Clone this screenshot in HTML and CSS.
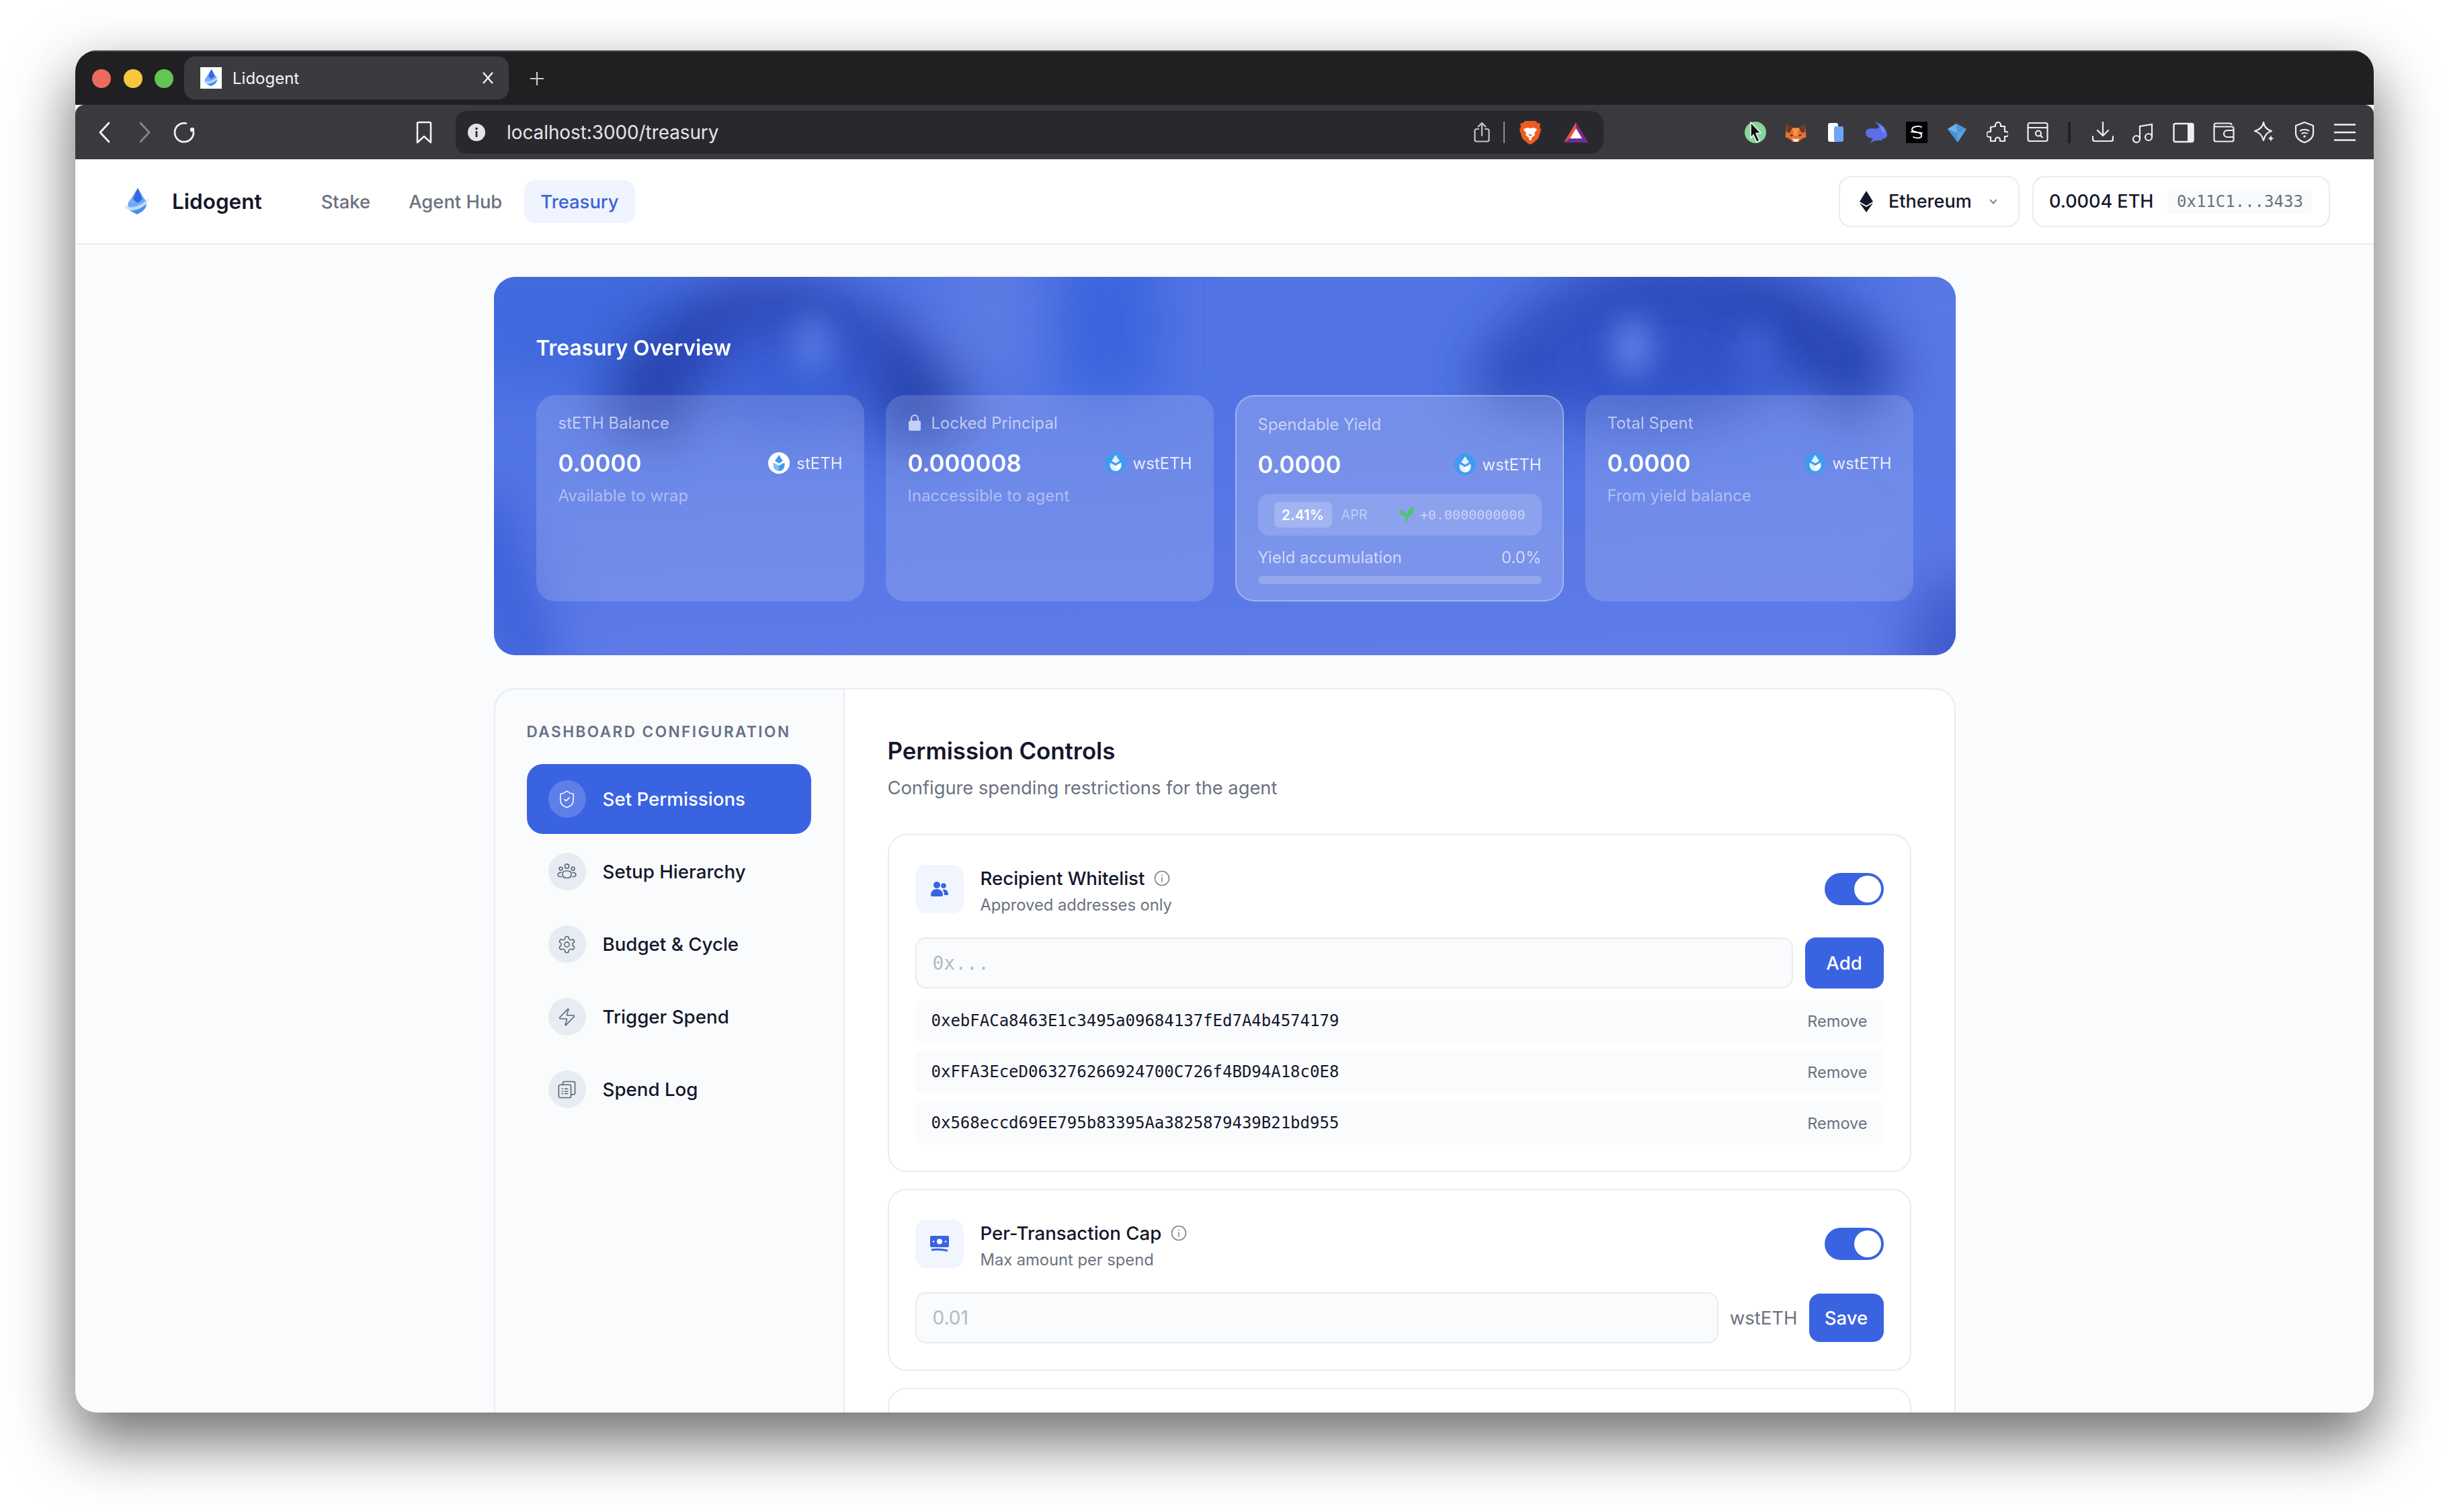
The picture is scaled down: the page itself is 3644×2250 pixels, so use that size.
FILE: index.html
```html
<!DOCTYPE html>
<html lang="en">
<head>
<meta charset="utf-8">
<title>Lidogent</title>
<link rel="stylesheet" href="styles.css">
</head>
<body>
<svg class="defs" width="0" height="0" aria-hidden="true">
  <defs>
    <linearGradient id="drop" x1="0" y1="0" x2="0.3" y2="1"><stop offset="0" stop-color="#3868e4"/><stop offset="0.5" stop-color="#7db2f4"/><stop offset="1" stop-color="#3f8cf0"/></linearGradient>
    <symbol id="logo" viewBox="0 0 40 40">
      <path d="M21 0 L31 16 C37 23 33 31 27 35 L20 39 L12 35 C5 31 4 23 10 17 Z" fill="url(#drop)"/>
      <path d="M21 0 L28 16 L21 22 L14 17 Z" fill="#3565e0"/>
      <path d="M1 25 C7 30 25 26 38 15 C37 25 17 38 4 31 C2 30 1 27 1 25 Z" fill="#d6e6fc" opacity=".85"/>
      <path d="M7 24 C14 27 26 22 34 17 C28 25 16 30 7 28 Z" fill="#78aef3"/>
    </symbol>
    <symbol id="wst" viewBox="0 0 32 32">
      <circle cx="16" cy="16" r="16" fill="#3f9bf1"/>
      <path d="M16 4 L22 13 L16 16.500 L10 13 Z" fill="#dff0ff"/>
      <path d="M8 15.500 L16 20 L16 28 C10 28 6 22 8 15.500 Z" fill="#dff0ff"/>
      <path d="M24 15.500 L16 20 L16 28 C22 28 26 22 24 15.500 Z" fill="#ffffff"/>
    </symbol>
    <symbol id="st" viewBox="0 0 32 32">
      <circle cx="16" cy="16" r="16" fill="#ffffff"/>
      <path d="M16 4 L22 13 L16 16.500 L10 13 Z" fill="#3f9bf1"/>
      <path d="M8 15.500 L16 20 L16 28 C10 28 6 22 8 15.500 Z" fill="#7fbdf5"/>
      <path d="M24 15.500 L16 20 L16 28 C22 28 26 22 24 15.500 Z" fill="#3f9bf1"/>
    </symbol>
    <symbol id="info" viewBox="0 0 24 24">
      <circle cx="12" cy="12" r="10.500" fill="none" stroke="#7b8290" stroke-width="1.600"/>
      <path d="M12 11v6" stroke="#7b8290" stroke-width="1.600" stroke-linecap="round"/>
      <circle cx="12" cy="7.600" r="1" fill="#7b8290"/>
    </symbol>
  </defs>
</svg>

<div class="window">
  <div class="tabstrip">
    <div class="lights"><span class="light red"></span><span class="light yellow"></span><span class="light green"></span></div>
    <div class="tab">
      <span class="favicon"><svg width="26" height="28"><use href="#logo"/></svg></span>
      <span class="tab-title">Lidogent</span>
      <svg class="tab-close" width="18" height="20" viewBox="0 0 18 20"><path d="M2 2l14 16M16 2L2 18" stroke="#f2f2f3" stroke-width="2.400"/></svg>
    </div>
    <svg class="tab-new" width="24" height="24" viewBox="0 0 24 24"><path d="M12 2v20M2 12h20" stroke="#c9c9cc" stroke-width="2.200"/></svg>
  </div>

  <div class="toolbar">
    <svg class="tb-back" width="18" height="32" viewBox="0 0 18 32"><path d="M16 2L3 16l13 14" fill="none" stroke="#f2f2f3" stroke-width="2.800" stroke-linecap="round" stroke-linejoin="round"/></svg>
    <svg class="tb-fwd" width="18" height="32" viewBox="0 0 18 32"><path d="M2 2l13 14L2 30" fill="none" stroke="#85858a" stroke-width="2.800" stroke-linecap="round" stroke-linejoin="round"/></svg>
    <svg class="tb-reload" width="34" height="34" viewBox="0 0 34 34"><path d="M20 3.500A14 14 0 1 0 31 17" fill="none" stroke="#f2f2f3" stroke-width="2.800" stroke-linecap="round"/><circle cx="29" cy="13" r="3.200" fill="#f2f2f3"/></svg>
    <svg class="tb-mark" width="26" height="34" viewBox="0 0 26 34"><path d="M3 4a2 2 0 0 1 2-2h16a2 2 0 0 1 2 2v28l-10-9L3 32z" fill="none" stroke="#f2f2f3" stroke-width="2.600" stroke-linejoin="round"/></svg>
    <div class="urlbar">
      <svg class="url-info" width="26" height="26" viewBox="0 0 26 26"><circle cx="13" cy="13" r="13" fill="#e4e4e8"/><rect x="11.600" y="11" width="2.800" height="9" fill="#2a2a2e"/><circle cx="13" cy="7.400" r="1.800" fill="#2a2a2e"/></svg>
      <span class="url-text">localhost:3000/treasury</span>
      <div class="url-actions">
        <svg width="24" height="32" viewBox="0 0 24 32"><path d="M7 11H4a2.500 2.500 0 0 0-2.500 2.500V27A2.500 2.500 0 0 0 4 29.500h16a2.500 2.500 0 0 0 2.500-2.500V13.500A2.500 2.500 0 0 0 20 11h-3M12 21V2M6.500 7.500L12 2l5.500 5.500" fill="none" stroke="#c6c6ca" stroke-width="2.200" stroke-linecap="round" stroke-linejoin="round"/></svg>
        <span class="url-sep"></span>
        <svg class="ic-brave" width="32" height="36" viewBox="0 0 32 36"><path d="M8 1h16l3 3 4 1-1 5 2 4-4 13-8 7-4 2-4-2-8-7L0 14l2-4-1-5 4-1z" fill="#ee5b22"/><path d="M8 12l5-1 3 1 3-1 5 1 2 2-4 5 1 3-5 4v3l-2 1-2-1v-3l-5-4 1-3-4-5z" fill="#fff"/><path d="M13 21h6l-3 3z" fill="#ee5b22"/></svg>
        <svg class="ic-bat" width="36" height="32" viewBox="0 0 36 32"><path d="M18 1L36 31H0z" fill="#7b2c8c"/><path d="M18 1L0 31l9-6L18 9z" fill="#ee5238"/><path d="M0 31h36l-9-6H9z" fill="#6b2f96"/><path d="M18 10l9 15H9z" fill="#fff"/></svg>
      </div>
    </div>
    <div class="exts">
      <svg class="ext" viewBox="0 0 32 32"><circle cx="16" cy="16" r="16" fill="#86d69b"/><path d="M9 1l15 16-7 .5 5 11-4 2-5-11-4 5z" fill="#0d0d0d" stroke="#fff" stroke-width="1.400"/></svg>
      <svg class="ext" viewBox="0 0 32 32"><path d="M1 15L3 3l7 6h12l7-6 2 12 .5 8-7 3-4 4h-9l-4-4-7-3z" fill="#e8702f"/><path d="M3 2l8 8-4 7-5-2zM29 2l-8 8 4 7 5-2z" fill="#6d3b23"/><path d="M11 10h10l-3 11h-4z" fill="#f4914c"/><path d="M11 25l5 1 5-1-2 5h-6z" fill="#f6e8dd"/><path d="M7 19l5 1-2 2zM25 19l-5 1 2 2z" fill="#2a211d"/></svg>
      <svg class="ext" viewBox="0 0 32 32"><rect x="4" y="2" width="15" height="28" rx="3" fill="#ffffff"/><rect x="13" y="7" width="14" height="23" rx="3" fill="#6ea4f3"/></svg>
      <svg class="ext" viewBox="0 0 33 32"><path d="M14 0C21 1 33 9 33 20C33 24 29 26 24 26L26 28L14 29L7 32L11 25C5 25 0 22 0 17C0 12 4 10 8 10C12 10 16 11 20 9C21 6 18 3 14 0Z" fill="#5e6ee8"/><path d="M22 5C26 8 29 13 29 19C26 15 24 10 22 5Z" fill="#8a9cf2"/></svg>
      <svg class="ext" viewBox="0 0 32 32"><rect width="32" height="32" fill="#000"/><path d="M23 8c-4-2-13-1-14 3-1 3 5 4 8 5 4 1 7 3 6 6-1 3-8 3-12 1M8 15l16 2" fill="none" stroke="#fff" stroke-width="1.800" stroke-linecap="round"/></svg>
      <svg class="ext" viewBox="0 0 32 32"><path d="M2 11L15 3l15 8-13 20z" fill="#5aa3e0"/><path d="M2 11l13-8 1 14z" fill="#6cb2ea"/><path d="M30 11L15 3l1 14z" fill="#4d94d4"/><path d="M2 11l14 6 1 14z" fill="#4a90d0"/></svg>
      <svg class="ext" viewBox="0 0 32 32"><path d="M13 5a4 4 0 0 1 8 0v2h6v8h2.500a3.500 3.500 0 0 1 0 7H27v7h-7v-2a3.500 3.500 0 0 0-7 0v2H6v-6H4a4 4 0 0 1 0-8h2V8l7-1z" fill="none" stroke="#efeff1" stroke-width="2.200" stroke-linejoin="round"/></svg>
      <svg class="ext" viewBox="0 0 32 32"><rect x="1.500" y="2" width="29" height="27" rx="2.500" fill="none" stroke="#efeff1" stroke-width="2.200"/><path d="M1.500 9h29" stroke="#efeff1" stroke-width="2.200"/><circle cx="17" cy="17.500" r="4" fill="none" stroke="#efeff1" stroke-width="2.200"/><path d="M20 20.500l3.500 3.500" stroke="#efeff1" stroke-width="2.200"/></svg>
      <span class="ext-sep"></span>
      <svg class="ext" viewBox="0 0 32 32"><path d="M16 1v20M8 13l8 8 8-8M1 22v4a3 3 0 0 0 3 3h24a3 3 0 0 0 3-3v-4" fill="none" stroke="#efeff1" stroke-width="2.200" stroke-linecap="round" stroke-linejoin="round"/></svg>
      <svg class="ext" viewBox="0 0 32 32"><path d="M11 25V7l18-3v19" fill="none" stroke="#efeff1" stroke-width="2.200"/><circle cx="6" cy="26" r="5" fill="none" stroke="#efeff1" stroke-width="2.200"/><circle cx="24" cy="23" r="5" fill="none" stroke="#efeff1" stroke-width="2.200"/></svg>
      <svg class="ext" viewBox="0 0 32 32"><rect x="1.500" y="3" width="29" height="27" rx="2.500" fill="none" stroke="#efeff1" stroke-width="2.400"/><path d="M22 3h6a2.500 2.500 0 0 1 2.500 2.500v22A2.500 2.500 0 0 1 28 30h-6z" fill="#efeff1"/></svg>
      <svg class="ext" viewBox="0 0 32 32"><path d="M1.500 7v20a2.500 2.500 0 0 0 2.500 2.500h24a2.500 2.500 0 0 0 2.500-2.500V10A2.500 2.500 0 0 0 28 7.500H4a2.500 2.500 0 0 1 0-5h21a2.500 2.500 0 0 1 2.500 2.500" fill="none" stroke="#efeff1" stroke-width="2.200"/><path d="M30 13H21a4 4 0 0 0 0 10h9" fill="none" stroke="#efeff1" stroke-width="2.200"/></svg>
      <svg class="ext" viewBox="0 0 32 32"><path d="M15 1c1 7 5 11 12 13-7 2-10 6-12 14-2-8-6-12-13-14C9 12 14 8 15 1z" fill="none" stroke="#efeff1" stroke-width="2.200" stroke-linejoin="round"/><path d="M26 20c.5 3 2 4.500 5 5-3 .5-4.500 2-5 5-.5-3-2-4.500-5-5 3-.5 4.500-2 5-5z" fill="#efeff1"/></svg>
      <svg class="ext" viewBox="0 0 32 32"><path d="M16 1l13 5v11c0 7-6 12-13 14C9 29 3 24 3 17V6z" fill="none" stroke="#efeff1" stroke-width="2.200" stroke-linejoin="round"/><path d="M9 14c4-3 10-3 14 0M11.500 18c3-2 6-2 9 0" fill="none" stroke="#efeff1" stroke-width="2"/><circle cx="16" cy="22" r="1.800" fill="#efeff1"/></svg>
      <svg class="ext" viewBox="0 0 32 32"><path d="M0 4.500h32M0 16h32M0 27.500h32" stroke="#efeff1" stroke-width="2.400"/></svg>
    </div>
  </div>

  <header class="navbar">
    <svg class="brand-logo" width="40" height="40"><use href="#logo"/></svg>
    <span class="brand-name">Lidogent</span>
    <nav class="nav">
      <a class="nav-link">Stake</a>
      <a class="nav-link">Agent Hub</a>
      <a class="nav-link is-active">Treasury</a>
    </nav>
    <div class="nav-right">
      <div class="chain-btn">
        <svg width="20" height="32" viewBox="0 0 20 32"><path d="M10 0L20 16 10 22 0 16z" fill="#14172b"/><path d="M0 18l10 6 10-6-10 14z" fill="#14172b"/></svg>
        <span>Ethereum</span>
        <svg class="chev" width="12" height="8" viewBox="0 0 12 8"><path d="M1 1l5 5.500L11 1" fill="none" stroke="#5f6675" stroke-width="1.600"/></svg>
      </div>
      <div class="wallet-btn">
        <span>0.0004 ETH</span>
        <span class="addr">0x11C1...3433</span>
      </div>
    </div>
  </header>

  <main class="page">
    <section class="hero">
      <svg class="hero-bg" viewBox="0 0 2175 563" preserveAspectRatio="none" aria-hidden="true">
        <defs>
          <filter id="b40" x="-30%" y="-30%" width="160%" height="160%"><feGaussianBlur stdDeviation="40"/></filter>
          <filter id="b15" x="-60%" y="-60%" width="220%" height="220%"><feGaussianBlur stdDeviation="20"/></filter>
        </defs>
        <g filter="url(#b40)">
          <rect x="-60" y="-40" width="340" height="200" fill="#4169de"/>
          <rect x="840" y="-40" width="150" height="220" fill="#3a63dd"/>
          <rect x="680" y="-40" width="120" height="200" fill="#5c7be4"/>
          <path d="M210 230C270 20 500 0 670 230" fill="none" stroke="#2643ae" stroke-width="130"/>
          <ellipse cx="440" cy="150" rx="130" ry="80" fill="#3a5fd6"/>
          <path d="M-30 330L60 610" stroke="#3a5fd8" stroke-width="90"/>
          <path d="M1510 190C1580 0 1900 -30 2060 180" fill="none" stroke="#2545b0" stroke-width="125"/>
          <ellipse cx="1720" cy="130" rx="200" ry="95" fill="#3053c8"/>
          <rect x="2110" y="-40" width="100" height="300" fill="#5a79e3"/>
          <ellipse cx="2190" cy="560" rx="90" ry="120" fill="#3f5ccc"/>
        </g>
        <g filter="url(#b15)">
          <ellipse cx="474" cy="100" rx="30" ry="42" fill="#5a7de6" opacity=".8"/>
          <ellipse cx="1694" cy="104" rx="30" ry="44" fill="#6285e8" opacity=".85"/>
          <ellipse cx="1880" cy="112" rx="30" ry="46" fill="#4566da" opacity=".7"/>
        </g>
      </svg>
      <h1 class="hero-title">Treasury Overview</h1>
      <div class="stats">
        <article class="stat">
          <div class="stat-label">stETH Balance</div>
          <div class="stat-row">
            <span class="stat-value">0.0000</span>
            <span class="token"><svg width="32" height="32"><use href="#st"/></svg>stETH</span>
          </div>
          <div class="stat-sub">Available to wrap</div>
        </article>
        <article class="stat">
          <div class="stat-label"><svg class="lock" width="18" height="26" viewBox="0 0 18 26"><path d="M4 11V7a5 5 0 0 1 10 0v4" fill="none" stroke="#c4cff5" stroke-width="2"/><rect y="10" width="18" height="15" rx="2.500" fill="#c4cff5"/></svg>Locked Principal</div>
          <div class="stat-row">
            <span class="stat-value">0.000008</span>
            <span class="token"><svg width="32" height="32"><use href="#wst"/></svg>wstETH</span>
          </div>
          <div class="stat-sub">Inaccessible to agent</div>
        </article>
        <article class="stat stat-hl">
          <div class="stat-label">Spendable Yield</div>
          <div class="stat-row">
            <span class="stat-value">0.0000</span>
            <span class="token"><svg width="32" height="32"><use href="#wst"/></svg>wstETH</span>
          </div>
          <div class="apr-box">
            <span class="apr-pill">2.41%</span>
            <span class="apr-label">APR</span>
            <svg class="leaf" width="24" height="26" viewBox="0 0 24 26"><path d="M11 25c-1-3-1-6 0-9C6 16 1 12 1 6c5 0 9 3 11 8 0-6 4-11 11-13 1 7-2 13-9 15-1 3-1 6-1 9z" fill="#4fc46f"/></svg>
            <span class="apr-num">+0.0000000000</span>
          </div>
          <div class="yield-row"><span>Yield accumulation</span><span>0.0%</span></div>
          <div class="progress"></div>
        </article>
        <article class="stat">
          <div class="stat-label">Total Spent</div>
          <div class="stat-row">
            <span class="stat-value">0.0000</span>
            <span class="token"><svg width="32" height="32"><use href="#wst"/></svg>wstETH</span>
          </div>
          <div class="stat-sub">From yield balance</div>
        </article>
      </div>
    </section>

    <section class="config">
      <aside class="side">
        <div class="side-head">DASHBOARD CONFIGURATION</div>
        <ul class="side-list">
          <li class="side-item is-active">
            <span class="side-ic"><svg viewBox="0 0 24 24"><path d="M20 13c0 5-3.500 7.500-7.660 8.950a1 1 0 0 1-.67-.01C7.500 20.500 4 18 4 13V6a1 1 0 0 1 1-1c2 0 4.500-1.200 6.240-2.720a1.170 1.170 0 0 1 1.520 0C14.510 3.810 17 5 19 5a1 1 0 0 1 1 1z"/><path d="M9 12l2 2 4-4"/></svg></span>
            Set Permissions
          </li>
          <li class="side-item">
            <span class="side-ic"><svg viewBox="0 0 24 24"><circle cx="12" cy="5" r="2.600"/><circle cx="4.500" cy="8" r="2"/><circle cx="19.500" cy="8" r="2"/><path d="M6.500 15c0-3 2.500-4.500 5.500-4.500s5.500 1.500 5.500 4.500-2.500 4.500-5.500 4.500-5.500-1.500-5.500-4.500z"/><path d="M5 12.500C2.500 12.800 1 14.200 1 15.500s1.500 2.500 4 2.500M19 12.500c2.500.3 4 1.700 4 3s-1.500 2.500-4 2.500"/></svg></span>
            Setup Hierarchy
          </li>
          <li class="side-item">
            <span class="side-ic"><svg viewBox="0 0 24 24"><path d="M12.220 2h-.440a2 2 0 0 0-2 2v.180a2 2 0 0 1-1 1.730l-.430.250a2 2 0 0 1-2 0l-.150-.080a2 2 0 0 0-2.730.730l-.220.380a2 2 0 0 0 .730 2.730l.150.100a2 2 0 0 1 1 1.720v.510a2 2 0 0 1-1 1.740l-.150.090a2 2 0 0 0-.730 2.730l.220.380a2 2 0 0 0 2.730.730l.150-.080a2 2 0 0 1 2 0l.430.250a2 2 0 0 1 1 1.730V20a2 2 0 0 0 2 2h.440a2 2 0 0 0 2-2v-.180a2 2 0 0 1 1-1.730l.430-.250a2 2 0 0 1 2 0l.150.080a2 2 0 0 0 2.730-.730l.220-.390a2 2 0 0 0-.730-2.730l-.150-.080a2 2 0 0 1-1-1.740v-.500a2 2 0 0 1 1-1.740l.150-.090a2 2 0 0 0 .730-2.730l-.220-.380a2 2 0 0 0-2.730-.730l-.150.080a2 2 0 0 1-2 0l-.430-.250a2 2 0 0 1-1-1.730V4a2 2 0 0 0-2-2z"/><circle cx="12" cy="12" r="3"/></svg></span>
            Budget &amp; Cycle
          </li>
          <li class="side-item">
            <span class="side-ic"><svg viewBox="0 0 24 24"><path d="M4 14a1 1 0 0 1-.780-1.630l9.900-10.200a.500.500 0 0 1 .860.460l-1.920 6.020A1 1 0 0 0 13 10h7a1 1 0 0 1 .780 1.630l-9.900 10.200a.500.500 0 0 1-.860-.460l1.920-6.020A1 1 0 0 0 11 14z"/></svg></span>
            Trigger Spend
          </li>
          <li class="side-item">
            <span class="side-ic"><svg viewBox="0 0 24 24"><rect x="2" y="6" width="15" height="16" rx="2"/><path d="M7 6V4a2 2 0 0 1 2-2h11a2 2 0 0 1 2 2v12a2 2 0 0 1-2 2h-3M6 11h1M9.500 11H13M6 14h1M9.500 14H13M6 17h1M9.500 17H13"/></svg></span>
            Spend Log
          </li>
        </ul>
      </aside>
      <div class="content">
        <h2 class="content-title">Permission Controls</h2>
        <p class="content-sub">Configure spending restrictions for the agent</p>

        <div class="perm">
          <div class="perm-head">
            <span class="perm-ic"><svg width="28" height="28" viewBox="0 0 28 28"><circle cx="10" cy="8" r="5" fill="#3a63e2"/><circle cx="20" cy="9" r="3.800" fill="#3a63e2"/><path d="M1 23c0-6 4-9 9-9s9 3 9 9c0 1-1 2-2 2H3c-1 0-2-1-2-2z" fill="#3a63e2"/><path d="M20 14.500c4 0 7 2.500 7 7 0 1-.8 1.500-1.500 1.500H21c0-3-.8-6-2.500-8z" fill="#3a63e2"/></svg></span>
            <div class="perm-text">
              <div class="perm-title">Recipient Whitelist <svg class="info" width="24" height="24"><use href="#info"/></svg></div>
              <div class="perm-sub">Approved addresses only</div>
            </div>
            <span class="toggle"><span class="knob"></span></span>
          </div>
          <div class="field-row">
            <input class="field field-mono" placeholder="0x..." readonly>
            <button class="btn btn-add">Add</button>
          </div>
          <ul class="addr-list">
            <li class="addr-row"><span class="addr-text">0xebFACa8463E1c3495a09684137fEd7A4b4574179</span><span class="remove">Remove</span></li>
            <li class="addr-row"><span class="addr-text">0xFFA3EceD063276266924700C726f4BD94A18c0E8</span><span class="remove">Remove</span></li>
            <li class="addr-row"><span class="addr-text">0x568eccd69EE795b83395Aa3825879439B21bd955</span><span class="remove">Remove</span></li>
          </ul>
        </div>

        <div class="perm">
          <div class="perm-head">
            <span class="perm-ic"><svg width="30" height="28" viewBox="0 0 30 28"><rect x="1" y="2" width="28" height="17" rx="2" fill="#3a63e2"/><circle cx="15" cy="10.500" r="4" fill="#fff"/><circle cx="6" cy="10.500" r="1.300" fill="#fff"/><circle cx="24" cy="10.500" r="1.300" fill="#fff"/><path d="M3 23c6-1 14-1 24 1" fill="none" stroke="#3a63e2" stroke-width="3"/></svg></span>
            <div class="perm-text">
              <div class="perm-title">Per-Transaction Cap <svg class="info" width="24" height="24"><use href="#info"/></svg></div>
              <div class="perm-sub">Max amount per spend</div>
            </div>
            <span class="toggle"><span class="knob"></span></span>
          </div>
          <div class="field-row">
            <input class="field field-sans" placeholder="0.01" readonly>
            <span class="unit">wstETH</span>
            <button class="btn btn-save">Save</button>
          </div>
        </div>

        <div class="perm perm-next"></div>
      </div>
    </section>
  </main>
</div>
</body>
</html>
```

FILE: styles.css
```css
* { box-sizing: border-box; }
html, body { margin: 0; padding: 0; }
body {
  width: 3644px;
  height: 2250px;
  padding: 75px 112px 0;
  background: #fff;
  overflow: hidden;
  font-family: Inter, "Noto Sans", sans-serif;
  color: #14172b;
}
ul { list-style: none; margin: 0; padding: 0; }
h1, h2, p { margin: 0; }
.defs { position: absolute; }

.window {
  width: 3420px;
  height: 2027px;
  border-radius: 32px;
  overflow: hidden;
  background: #f9fbfd;
  display: flex;
  flex-direction: column;
  box-shadow: 0 40px 90px 4px rgba(0, 0, 0, .56);
}

/* tab strip */
.tabstrip {
  height: 81px;
  flex: none;
  background: #202023;
  display: flex;
  align-items: flex-start;
  box-shadow: inset 0 2px 0 #4a4a4e;
}
.lights { display: flex; gap: 18.500px; margin: 28px 0 0 25px; }
.light { width: 28px; height: 28px; border-radius: 50%; }
.red { background: #ee6a5f; }
.yellow { background: #f5c63e; }
.green { background: #62c554; }
.tab {
  width: 483px;
  height: 64px;
  margin: 9px 0 0 16px;
  padding: 0 22px 0 24px;
  background: #3b3b3f;
  border-radius: 16px;
  display: flex;
  align-items: center;
  color: #f4f4f5;
  font-size: 24px;
}
.favicon { width: 32px; height: 32px; background: #fff; display: flex; align-items: center; justify-content: center; flex: none; }
.tab-title { margin-left: 16px; flex: 1; }
.tab-new { margin: 30px 0 0 30px; }

/* toolbar */
.toolbar {
  height: 81px;
  flex: none;
  background: #3a3a3e;
  border-radius: 14px 14px 0 0;
  display: flex;
  align-items: center;
}
.tb-back { margin-left: 34px; }
.tb-fwd { margin-left: 43px; }
.tb-reload { margin-left: 32px; }
.tb-mark { margin-left: 327px; }
.urlbar {
  width: 1708px;
  height: 64px;
  margin-left: 34px;
  padding: 0 23px 0 18px;
  background: #29292d;
  border-radius: 16px 20px 20px 16px;
  display: flex;
  align-items: center;
  color: #e6e6e8;
  font-size: 27.800px;
}
.url-text { margin-left: 32px; flex: 1; }
.url-actions { display: flex; align-items: center; }
.url-sep { width: 2px; height: 32px; background: #8d8d92; margin: 0 22px 0 20px; }
.ic-bat { margin-left: 34px; }
.exts { display: flex; align-items: center; gap: 28px; margin-left: 210px; }
.ext { width: 32px; height: 32px; flex: none; }
.ext-sep { width: 4px; height: 32px; background: #202023; margin: 0 4px 0 1px; }

/* navbar */
.navbar {
  height: 127px;
  flex: none;
  background: #fff;
  border-bottom: 2px solid #e8ebef;
  display: flex;
  align-items: center;
  padding: 0 65px 0 72px;
}
.brand-logo { flex: none; }
.brand-name { margin-left: 32px; font-size: 31.500px; font-weight: 600; }
.nav { display: flex; gap: 9px; margin-left: 64px; }
.nav-link {
  height: 64px;
  padding: 0 24px;
  border-radius: 16px;
  display: flex;
  align-items: center;
  font-size: 27.400px;
  font-weight: 500;
  color: #6b7280;
}
.nav-link.is-active { background: #eff4fe; color: #3b63d9; }
.nav-right { margin-left: auto; display: flex; gap: 19px; }
.chain-btn, .wallet-btn {
  height: 76px;
  border: 2px solid #e8ebef;
  border-radius: 18px;
  background: #fff;
  display: flex;
  align-items: center;
  font-size: 27px;
  font-weight: 500;
}
.chain-btn { width: 269px; padding-left: 29px; }
.chain-btn span { margin-left: 23px; }
.chev { margin-left: 26px; }
.wallet-btn { width: 443px; padding: 0 25px 0 23px; justify-content: space-between; }
.addr {
  height: 38px;
  width: 215px;
  padding-left: 14px;
  display: flex;
  align-items: center;
  background: #f8fafc;
  border-radius: 8px;
  font-family: "DejaVu Sans Mono", monospace;
  font-size: 24px;
  font-weight: 400;
  color: #6b7280;
}

/* page */
.page { flex: 1; min-height: 0; padding-top: 48px; overflow: hidden; }
.hero {
  position: relative;
  width: 2175px;
  height: 563px;
  margin: 0 auto 49px;
  padding: 84px 63px 0;
  border-radius: 32px;
  overflow: hidden;
  background: linear-gradient(178deg, #5274e4 0%, #5274e4 40%, #607ce8 100%);
}
.hero-bg { position: absolute; inset: 0; width: 100%; height: 100%; }
.hero-title { position: relative; font-size: 31.700px; line-height: 44px; font-weight: 600; color: #fff; margin-bottom: 48px; }
.stats { position: relative; display: grid; grid-template-columns: repeat(4, 1fr); gap: 32px; }
.stat {
  height: 307px;
  padding: 27px 32px 0 33px;
  border-radius: 28px;
  background: rgba(255, 255, 255, .15);
  color: #fff;
}
.stat-hl { background: rgba(255, 255, 255, .2); border: 2px solid rgba(255, 255, 255, .3); padding: 27px 31px 0 32px; }
.stat-label { display: flex; align-items: center; height: 28px; font-size: 24px; color: rgba(255, 255, 255, .6); }
.lock { margin-right: 16px; margin-left: 1px; }
.stat-row { display: flex; align-items: center; justify-content: space-between; height: 48px; margin-top: 22px; }
.stat-value { font-size: 34.800px; font-weight: 600; }
.token { display: flex; align-items: center; gap: 10px; font-size: 24px; color: rgba(255, 255, 255, .85); }
.stat-sub { margin-top: 10px; line-height: 30px; font-size: 24px; color: rgba(255, 255, 255, .45); }
.apr-box {
  height: 62px;
  margin-top: 20px;
  padding: 0 24px;
  border-radius: 16px;
  background: rgba(255, 255, 255, .15);
  display: flex;
  align-items: center;
}
.apr-pill {
  width: 86px;
  height: 38px;
  border-radius: 8px;
  background: rgba(255, 255, 255, .2);
  display: flex;
  align-items: center;
  justify-content: center;
  font-size: 21px;
  font-weight: 600;
}
.apr-label { margin-left: 14px; font-size: 20px; color: rgba(255, 255, 255, .45); }
.leaf { margin-left: 46px; flex: none; }
.apr-num { margin-left: 8px; font-family: "DejaVu Sans Mono", monospace; font-size: 20px; color: rgba(255, 255, 255, .55); }
.yield-row {
  display: flex;
  justify-content: space-between;
  margin-top: 18px;
  line-height: 30px;
  font-size: 24px;
  color: rgba(255, 255, 255, .65);
}
.progress { height: 12px; margin-top: 12px; border-radius: 6px; background: rgba(255, 255, 255, .2); }

/* config */
.config {
  width: 2175px;
  margin: 0 auto;
  height: 1200px;
  border: 2px solid #e8ebef;
  border-radius: 32px;
  background: #fff;
  overflow: hidden;
  display: grid;
  grid-template-columns: 520px 1fr;
}
.side { background: #f9fbfd; border-right: 2px solid #e8ebef; padding: 49px 48px 0 47px; }
.side-head { line-height: 28px; font-size: 22.500px; font-weight: 600; letter-spacing: 2.500px; color: #667085; margin-bottom: 34px; white-space: nowrap; }
.side-list { display: flex; flex-direction: column; gap: 4px; }
.side-item {
  height: 104px;
  padding-left: 32px;
  border-radius: 24px;
  display: flex;
  align-items: center;
  gap: 25px;
  font-size: 27.700px;
  font-weight: 500;
}
.side-item.is-active { background: #3a63e2; color: #fff; }
.side-ic {
  width: 56px;
  height: 56px;
  border-radius: 50%;
  background: #e7ebf2;
  display: flex;
  align-items: center;
  justify-content: center;
  flex: none;
}
.side-ic svg { width: 29px; height: 29px; fill: none; stroke: #5b6475; stroke-width: 1.300; stroke-linecap: round; stroke-linejoin: round; }
.is-active .side-ic { background: rgba(255, 255, 255, .18); }
.is-active .side-ic svg { stroke: #fff; }

.content { padding: 67px 64px 0; background: #fff; }
.content-title { font-size: 34.800px; line-height: 48px; font-weight: 600; }
.content-sub { margin-top: 14px; font-size: 27.300px; line-height: 36px; color: #6b7280; }
.perm {
  margin-top: 25px;
  padding: 44px 39px 39px;
  border: 2px solid #e8ebef;
  border-radius: 28px;
  background: #fff;
}
.content-sub + .perm { margin-top: 50px; }
.perm-next { height: 200px; }
.perm-head { display: flex; align-items: center; height: 72px; }
.perm-ic {
  width: 72px;
  height: 72px;
  border-radius: 16px;
  background: #f1f6fe;
  display: flex;
  align-items: center;
  justify-content: center;
  flex: none;
}
.perm-text { margin-left: 25px; padding-top: 4px; flex: 1; }
.perm-title { display: flex; align-items: center; gap: 14px; font-size: 27.600px; line-height: 36px; font-weight: 500; }
.perm-sub { margin-top: 7px; font-size: 23.700px; line-height: 30px; color: #6b7280; }
.toggle { width: 88px; height: 48px; border-radius: 24px; background: #3a63e2; position: relative; flex: none; }
.knob { position: absolute; top: 4px; right: 4px; width: 40px; height: 40px; border-radius: 50%; background: #fff; }
.field-row { display: flex; align-items: center; margin-top: 36px; }
.field {
  flex: 1;
  min-width: 0;
  height: 76px;
  padding: 0 24px;
  border: 2px solid #e8ebef;
  border-radius: 16px;
  background: #f9fbfd;
  outline: none;
}
.field::placeholder { color: #b4b9c2; opacity: 1; }
.field-mono { font-family: "DejaVu Sans Mono", monospace; font-size: 28px; }
.field-sans { font-family: Inter, sans-serif; font-size: 28px; }
.btn {
  border: 0;
  border-radius: 16px;
  background: #3a63e2;
  color: #fff;
  font-family: Inter, sans-serif;
  font-size: 27.500px;
  font-weight: 500;
}
.btn-add { width: 117px; height: 76px; margin-left: 18px; }
.btn-save { width: 111px; height: 72px; margin-left: 17px; }
.unit { margin-left: 17px; font-size: 27.500px; color: #6b7280; }
.addr-list { display: flex; flex-direction: column; gap: 12px; margin-top: 16px; }
.addr-row {
  height: 64px;
  padding: 0 24px;
  border-radius: 12px;
  background: #f9fbfd;
  display: flex;
  align-items: center;
  justify-content: space-between;
}
.addr-text { font-family: "DejaVu Sans Mono", monospace; font-size: 24px; }
.remove { font-size: 23.500px; color: #6b7280; }
```
